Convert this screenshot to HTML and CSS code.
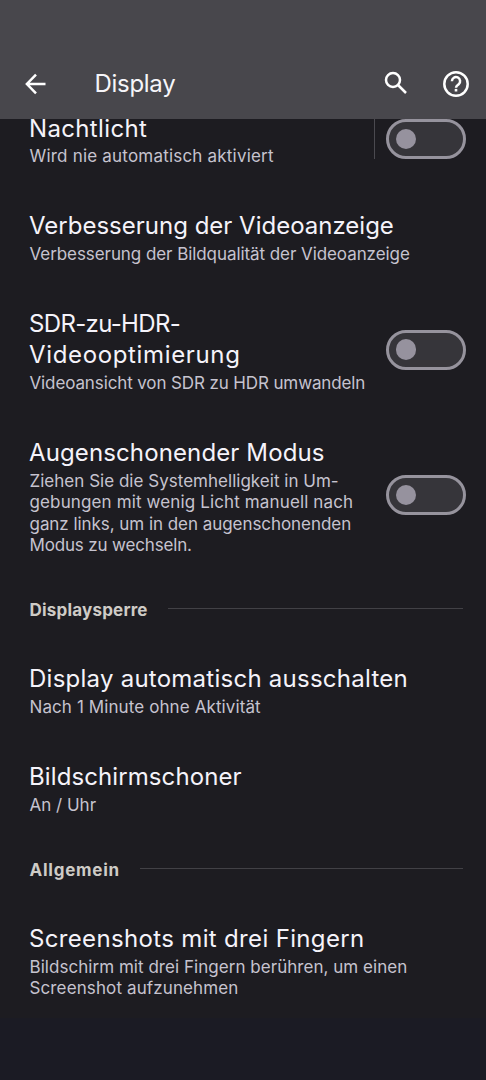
FILE: index.html
```html
<!DOCTYPE html>
<html lang="de">
<head><meta charset="utf-8"><title>Display</title><link rel="stylesheet" href="styles.css"></head>
<body>
<div class="screen">
  <header class="bar">
    <svg class="back" viewBox="0 0 22 22"><path d="M20.5 11H2M11 1.7 1.9 11l9.1 9.3"/></svg>
    <h1 class="bar-title">Display</h1>
    <svg class="search" viewBox="0 0 24 24"><circle cx="9" cy="9" r="7"/><path d="m14 14 8 8"/></svg>
    <svg class="help" viewBox="0 0 26 26"><circle cx="13" cy="13" r="11.7"/><path d="M8.9 10.2a4.1 4.1 0 1 1 6.8 3.1c-1.6 1.3-2.7 1.9-2.7 3.5"/><path class="dot" d="M11.7 17.9h2.6v2.6h-2.6z"/></svg>
  </header>
  <main class="list">
    <section class="item">
      <div class="text"><h2 class="title nacht">Nachtlicht</h2><p class="sub wird">Wird nie automatisch aktiviert</p></div>
      <div class="control split"><span class="switch"></span></div>
    </section>
    <section class="item">
      <div class="text"><h2 class="title video">Verbesserung der Videoanzeige</h2><p class="sub bildq">Verbesserung der Bildqualität der Videoanzeige</p></div>
    </section>
    <section class="item">
      <div class="text"><h2 class="title"><span class="line sdr">SDR-zu-HDR-</span><span class="line opt">Videooptimierung</span></h2><p class="sub ansicht">Videoansicht von SDR zu HDR umwandeln</p></div>
      <div class="control"><span class="switch"></span></div>
    </section>
    <section class="item">
      <div class="text"><h2 class="title augen">Augenschonender Modus</h2>
      <p class="sub"><span class="line z1">Ziehen Sie die Systemhelligkeit in Um-</span><span class="line z2">gebungen mit wenig Licht manuell nach</span><span class="line z3">ganz links, um in den augenschonenden</span><span class="line z4">Modus zu wechseln.</span></p></div>
      <div class="control"><span class="switch"></span></div>
    </section>
    <div class="group"><h3 class="group-name sperre">Displaysperre</h3><span class="rule"></span></div>
    <section class="item">
      <div class="text"><h2 class="title auto">Display automatisch ausschalten</h2><p class="sub minute">Nach 1 Minute ohne Aktivität</p></div>
    </section>
    <section class="item">
      <div class="text"><h2 class="title schoner">Bildschirmschoner</h2><p class="sub uhr">An / Uhr</p></div>
    </section>
    <div class="group"><h3 class="group-name allgemein">Allgemein</h3><span class="rule"></span></div>
    <section class="item">
      <div class="text"><h2 class="title drei">Screenshots mit drei Fingern</h2>
      <p class="sub"><span class="line s1">Bildschirm mit drei Fingern berühren, um einen</span><span class="line s2">Screenshot aufzunehmen</span></p></div>
    </section>
  </main>
  <footer class="nav"></footer>
</div>
</body>
</html>
```
FILE: styles.css
```css
* { box-sizing: border-box; margin: 0; padding: 0; }
body { background: #1d1c21; font-family: Inter, "Noto Sans", sans-serif; }
.screen { width: 486px; height: 1080px; display: flex; flex-direction: column; overflow: hidden; background: #1d1c21; }

/* App bar */
.bar { flex: none; height: 119px; padding: 48px 17px 0 25px; display: flex; align-items: center; background: #48474c; }
.bar svg { flex: none; fill: none; stroke: #fff; stroke-width: 2.5; }
.back { width: 22px; height: 22px; }
.bar-title { margin-left: 47.5px; font-size: 24px; font-weight: 400; line-height: 30px; color: #f6f5f9; letter-spacing: -.3px; }
.bar .search { width: 24px; height: 24px; margin: 0 0 1px auto; }
.help { width: 26px; height: 26px; margin-left: 35px; }
.bar .dot { fill: #fff; stroke: none; }

/* Settings list */
.list { flex: 1; min-height: 0; overflow: hidden; margin-top: -5.5px; padding: 0 20px 0 29px; clip-path: inset(5.5px 0 0); }
.item { display: flex; justify-content: space-between; align-items: center; padding-bottom: 43.7px; }
.text { white-space: nowrap; }
.title { font-size: 24px; font-weight: 400; line-height: 30.5px; color: #f5f3fa; }
.sub { margin-top: 2.2px; font-size: 17px; line-height: 21.6px; color: #c6c3cf; padding-left: .5px; }
.line { display: block; }
.control { display: flex; align-items: center; margin-bottom: 4.5px; }
.split { border-left: 1px solid #4b4a50; height: 40px; padding-left: 11px; margin-bottom: 3px; }
.switch { display: flex; align-items: center; width: 80px; height: 40px; padding-left: 6.5px; border: 3px solid #96939d; border-radius: 20px; background: #36353a; }
.switch::before { content: ""; width: 20.5px; height: 20.5px; border-radius: 50%; background: #96929e; }

/* Group headings */
.group { display: flex; align-items: center; height: 22px; margin: 0 3px 43.4px .5px; }
.item + .group { margin-top: -1.6px; }
.group-name { font-size: 17px; font-weight: 700; line-height: 22px; color: #cecbc6; }
.rule { flex: 1; height: 1px; margin: 0 0 3px 20px; background: #424146; }

.nav { flex: none; height: 62px; background: #1b1b24; }

/* Tracking of each label */
.nacht { letter-spacing: .35px; }
.wird { letter-spacing: .2px; }
.video { letter-spacing: 0; }
.bildq { letter-spacing: -.07px; }
.sdr { letter-spacing: -.66px; }
.opt { letter-spacing: .65px; }
.ansicht { letter-spacing: -.12px; }
.augen { letter-spacing: .12px; }
.z1 { letter-spacing: .02px; }
.z2 { letter-spacing: .13px; }
.z3 { letter-spacing: -.05px; }
.z4 { letter-spacing: -.16px; }
.sperre { letter-spacing: .2px; }
.auto { letter-spacing: .25px; }
.minute { letter-spacing: .1px; }
.schoner { letter-spacing: .1px; }
.uhr { letter-spacing: 0; }
.allgemein { letter-spacing: .75px; }
.drei { letter-spacing: .34px; }
.s1 { letter-spacing: .04px; }
.s2 { letter-spacing: .12px; }
```
